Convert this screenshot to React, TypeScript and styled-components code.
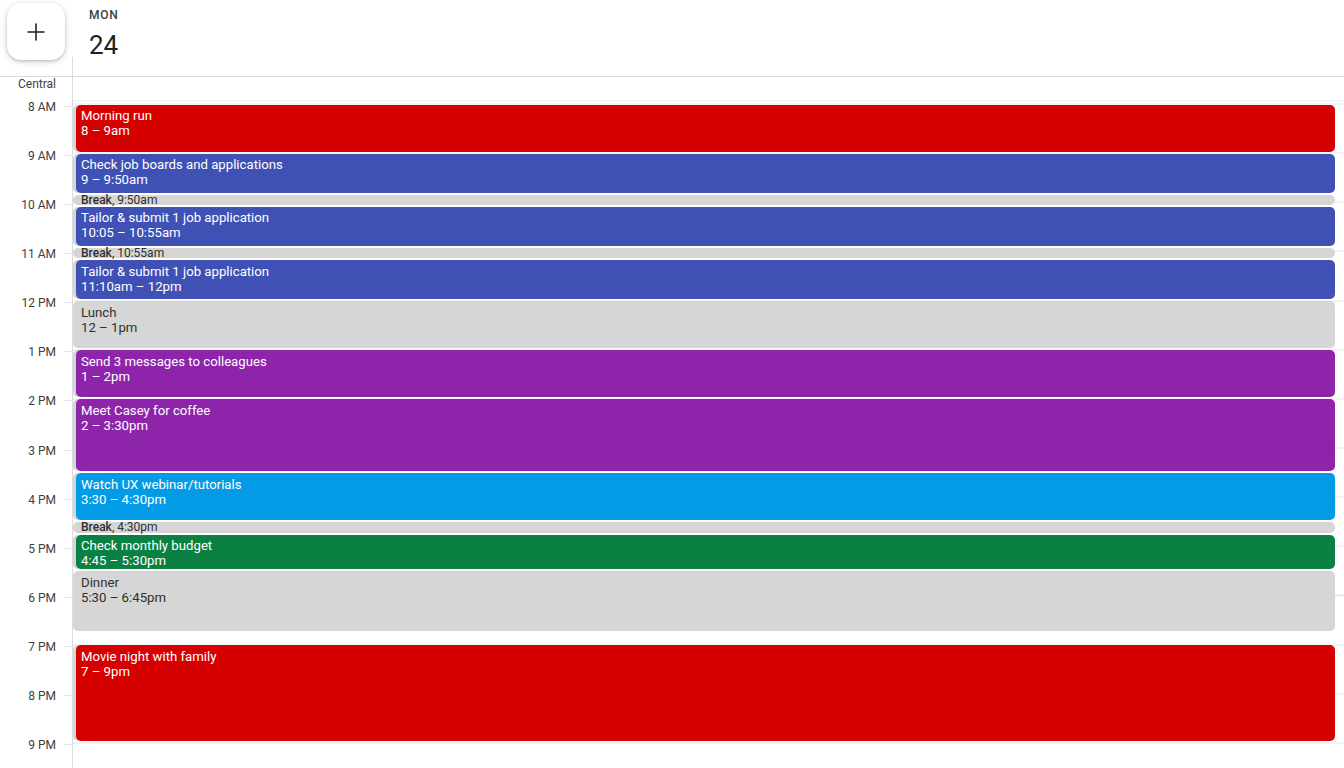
import * as React from 'react';
import styled, { createGlobalStyle } from 'styled-components';

const HOUR = 49.15;
const ORIGIN = 27.5;
const START_HOUR = 8;
const HOURS = ['8 AM', '9 AM', '10 AM', '11 AM', '12 PM', '1 PM', '2 PM', '3 PM', '4 PM', '5 PM', '6 PM', '7 PM', '8 PM', '9 PM'];

const palette = {
  tomato: '#d50000',
  blueberry: '#3f51b5',
  grape: '#8e24aa',
  peacock: '#039be5',
  basil: '#0b8043',
  light: '#d6d6d6',
};

type Tone = keyof typeof palette;

interface CalEvent {
  title: string;
  time: string;
  start: number;
  end: number;
  tone: Tone;
  compact?: boolean;
}

const events: CalEvent[] = [
  { title: 'Morning run', time: '8 – 9am', start: 8, end: 9, tone: 'tomato' },
  { title: 'Check job boards and applications', time: '9 – 9:50am', start: 9, end: 9 + 50 / 60, tone: 'blueberry' },
  { title: 'Break', time: '9:50am', start: 9 + 50 / 60, end: 10 + 5 / 60, tone: 'light', compact: true },
  { title: 'Tailor & submit 1 job application', time: '10:05 – 10:55am', start: 10 + 5 / 60, end: 10 + 55 / 60, tone: 'blueberry' },
  { title: 'Break', time: '10:55am', start: 10 + 55 / 60, end: 11 + 10 / 60, tone: 'light', compact: true },
  { title: 'Tailor & submit 1 job application', time: '11:10am – 12pm', start: 11 + 10 / 60, end: 12, tone: 'blueberry' },
  { title: 'Lunch', time: '12 – 1pm', start: 12, end: 13, tone: 'light' },
  { title: 'Send 3 messages to colleagues', time: '1 – 2pm', start: 13, end: 14, tone: 'grape' },
  { title: 'Meet Casey for coffee', time: '2 – 3:30pm', start: 14, end: 15.5, tone: 'grape' },
  { title: 'Watch UX webinar/tutorials', time: '3:30 – 4:30pm', start: 15.5, end: 16.5, tone: 'peacock' },
  { title: 'Break', time: '4:30pm', start: 16.5, end: 16.75, tone: 'light', compact: true },
  { title: 'Check monthly budget', time: '4:45 – 5:30pm', start: 16.75, end: 17.5, tone: 'basil' },
  { title: 'Dinner', time: '5:30 – 6:45pm', start: 17.5, end: 18.75, tone: 'light' },
  { title: 'Movie night with family', time: '7 – 9pm', start: 19, end: 21, tone: 'tomato' },
];

const GlobalStyle = createGlobalStyle`
  html, body {
    margin: 0;
    background: #fff;
    font-family: Roboto, "Liberation Sans", Arial, sans-serif;
    color: #3c4043;
    overflow: hidden;
  }
`;

const Page = styled.div`
  width: 1344px;
  height: 768px;
  display: flex;
  flex-direction: column;
`;

const Header = styled.header`
  display: grid;
  grid-template-columns: 72px 1fr;
  height: 76px;
  border-bottom: 1px solid #dadce0;
  position: relative;

  &::after {
    content: '';
    position: absolute;
    left: 72px;
    bottom: 0;
    height: 19px;
    border-left: 1px solid #dadce0;
  }
`;

const FabCell = styled.div`
  padding: 3px 0 0 7px;
`;

const Fab = styled.button`
  width: 58px;
  height: 57px;
  border: none;
  border-radius: 14px;
  background: #fff;
  box-shadow: 0 1px 3px rgba(60, 64, 67, 0.3), 0 2px 6px 1px rgba(60, 64, 67, 0.12);
  display: flex;
  align-items: center;
  justify-content: center;
  padding: 0;
  cursor: pointer;
`;

const DayHead = styled.div`
  display: flex;
  flex-direction: column;
  padding: 8px 0 0 17px;
`;

const DayName = styled.div`
  font-size: 12px;
  font-weight: 500;
  letter-spacing: 0.8px;
  line-height: 14px;
  color: #3c4043;
`;

const DayNumber = styled.div`
  font-size: 26px;
  line-height: 32px;
  margin-top: 7px;
  color: #202124;
`;

const Body = styled.div`
  flex: 1;
  display: grid;
  grid-template-columns: 72px 1fr;
`;

const Gutter = styled.div`
  position: relative;
`;

const Zone = styled.div`
  font-size: 12px;
  line-height: 14px;
  color: #3c4043;
  text-align: right;
  padding: 0 16px 0 0;
`;

const HourLabel = styled.div`
  position: absolute;
  right: 16px;
  font-size: 12px;
  line-height: 14px;
  color: #3c4043;
  transform: translateY(-6px);

  &::after {
    content: '';
    position: absolute;
    left: calc(100% + 8px);
    top: 6px;
    width: 9px;
    border-top: 1px solid #e3e3e8;
  }
`;

const Column = styled.div`
  position: relative;
  border-left: 1px solid #dadce0;
  background-image: repeating-linear-gradient(
    to bottom,
    #e6e6ea 0,
    #e6e6ea 1px,
    transparent 1px,
    transparent ${HOUR}px
  );
  background-position: 0 ${ORIGIN - 1}px;
  background-repeat: repeat-y;
`;

const Block = styled.div<{ $tone: Tone }>`
  position: absolute;
  left: ${(p) => (p.$tone === 'light' ? '0' : '3px')};
  right: 9px;
  box-sizing: border-box;
  border-radius: 5px;
  background: ${(p) => palette[p.$tone]};
  color: ${(p) => (p.$tone === 'light' ? '#2f2f2f' : '#fff')};
  box-shadow: ${(p) => (p.$tone === 'light' ? 'none' : '-3px 0 0 0 #d6d6d6')};
  padding: 3.5px 8px 0 ${(p) => (p.$tone === 'light' ? '8px' : '5px')};
  overflow: hidden;
  font-size: 13.2px;
  line-height: 15px;
`;

const Title = styled.div`
  white-space: nowrap;
`;

const Time = styled.div`
  white-space: nowrap;
`;

const BreakBlock = styled(Block)`
  padding-top: 0;
  font-size: 12px;
  line-height: 10px;
  overflow: visible;
  white-space: nowrap;
`;

const BreakName = styled.span`
  font-weight: 500;
`;

const PlusIcon = () => (
  <svg width="20" height="20" viewBox="0 0 20 20" fill="none" stroke="#202124" strokeWidth="1.6" strokeLinecap="round">
    <path d="M10 2v16M2 10h16" />
  </svg>
);

const toTop = (h: number) => ORIGIN + (h - START_HOUR) * HOUR;

const App = () => (
  <Page>
    <GlobalStyle />
    <Header>
      <FabCell>
        <Fab aria-label="Create">
          <PlusIcon />
        </Fab>
      </FabCell>
      <DayHead>
        <DayName>MON</DayName>
        <DayNumber>24</DayNumber>
      </DayHead>
    </Header>
    <Body>
      <Gutter>
        <Zone>Central</Zone>
        {HOURS.map((h, i) => (
          <HourLabel key={h} style={{ top: ORIGIN + i * HOUR + 1 }}>
            {h}
          </HourLabel>
        ))}
      </Gutter>
      <Column>
        {events.map((e, i) => {
          const style = { top: toTop(e.start), height: (e.end - e.start) * HOUR - 2 };
          if (e.compact) {
            return (
              <BreakBlock key={i} $tone={e.tone} style={style}>
                <BreakName>{e.title}</BreakName>, {e.time}
              </BreakBlock>
            );
          }
          return (
            <Block key={i} $tone={e.tone} style={style}>
              <Title>{e.title}</Title>
              <Time>{e.time}</Time>
            </Block>
          );
        })}
      </Column>
    </Body>
  </Page>
);

export default App;
